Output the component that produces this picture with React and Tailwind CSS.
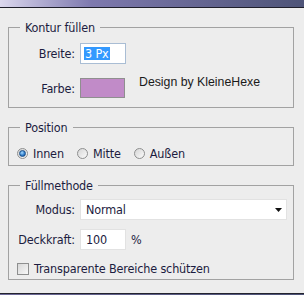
import React from "react";

function Radio({ checked, label }) {
  return (
    <div className="flex items-center">
      <span className="w-[11px] h-[11px] rounded-full border border-[#8e8f8f] bg-gradient-to-br from-[#d6d6d6] to-[#fbfbfb] flex items-center justify-center">
        {checked && (
          <span className="w-[7px] h-[7px] rounded-full border border-[#1c4f86] bg-[radial-gradient(circle_at_40%_35%,#a8dcff,#2a78c8_60%,#1a4f8c)]" />
        )}
      </span>
      <span className="ml-[5px]">{label}</span>
    </div>
  );
}

function Group({ title, className, children }) {
  return (
    <fieldset className={"border border-[#a2a2a2] " + className}>
      <legend className="ml-[11px] px-[5px] leading-[15px]">{title}</legend>
      {children}
    </fieldset>
  );
}

export default function App() {
  return (
    <div className="w-[304px] h-[295px] bg-[#ededed] flex flex-col overflow-hidden font-['DejaVu_Sans_Condensed','DejaVu_Sans',sans-serif] font-stretch-condensed text-[12.5px] tracking-[-0.15px] text-[#1c1c40]">
      <div className="h-[7px] bg-gradient-to-r from-[#dcd8ee] via-[#7e79ae] via-30% to-[#4e5478]" />
      <div className="h-px bg-[#1e1e2a]" />
      <div className="flex-1 flex flex-col pl-[8px] pr-[10px]">
        <Group title="Kontur füllen" className="mt-[12px] pt-[8px] pb-[9px]">
          <div className="flex items-center h-[21px]">
            <span className="w-[66px] text-right leading-[15px]">Breite:</span>
            <div className="ml-[5px] w-[46px] h-[21px] bg-white border border-[#a9bdd4] flex items-center pl-[3px]">
              <span className="bg-[#3399ff] text-white leading-[13px] px-px">3 Px</span>
            </div>
          </div>
          <div className="flex items-start mt-[14px]">
            <span className="w-[66px] text-right leading-[15px] mt-[3px]">Farbe:</span>
            <div className="ml-[5px] w-[45px] h-[20px] bg-[#c18bc8] border border-[#8f8f8f]" />
            <span className="ml-[14px] -mt-[3px] font-['Liberation_Sans',Arial,sans-serif] font-stretch-normal tracking-normal text-[12.3px] leading-[15px] text-[#1a1a1a]">Design by KleineHexe</span>
          </div>
        </Group>

        <Group title="Position" className="mt-[12px] pt-[11px] pb-[4px]">
          <div className="flex items-center h-[15px] leading-[15px] pl-[8px] gap-[13px]">
            <Radio checked label="Innen" />
            <Radio label="Mitte" />
            <Radio label="Außen" />
          </div>
        </Group>

        <Group title="Füllmethode" className="mt-[12px] pt-[6px] pb-[3px]">
          <div className="flex items-center h-[21px]">
            <span className="w-[66px] text-right leading-[15px]">Modus:</span>
            <div className="ml-[5px] mr-[6px] flex-1 h-[21px] bg-white border border-[#e2e2e2] flex items-center justify-between pl-[5px] pr-[4px]">
              <span className="leading-[15px]">Normal</span>
              <svg width="7" height="4" viewBox="0 0 7 4">
                <path d="M0 0H7L3.5 4Z" fill="#111" />
              </svg>
            </div>
          </div>
          <div className="flex items-center h-[21px] mt-[9px]">
            <span className="w-[66px] text-right leading-[15px]">Deckkraft:</span>
            <div className="ml-[5px] w-[46px] h-[21px] bg-white border border-[#e2e2e2] flex items-center pl-[5px]">
              <span className="leading-[15px]">100</span>
            </div>
            <span className="ml-[5px] leading-[15px]">%</span>
          </div>
          <div className="flex items-center h-[15px] mt-[11px] pl-[8px]">
            <span className="w-[12px] h-[12px] border border-[#8e8f8f] bg-gradient-to-br from-[#d8d8d8] to-[#f8f8f8]" />
            <span className="ml-[5px] leading-[15px]">Transparente Bereiche schützen</span>
          </div>
        </Group>
      </div>
      <div className="h-px bg-[#23232e]" />
      <div className="h-px bg-gradient-to-r from-[#6e6a98] to-[#4c5276]" />
    </div>
  );
}
